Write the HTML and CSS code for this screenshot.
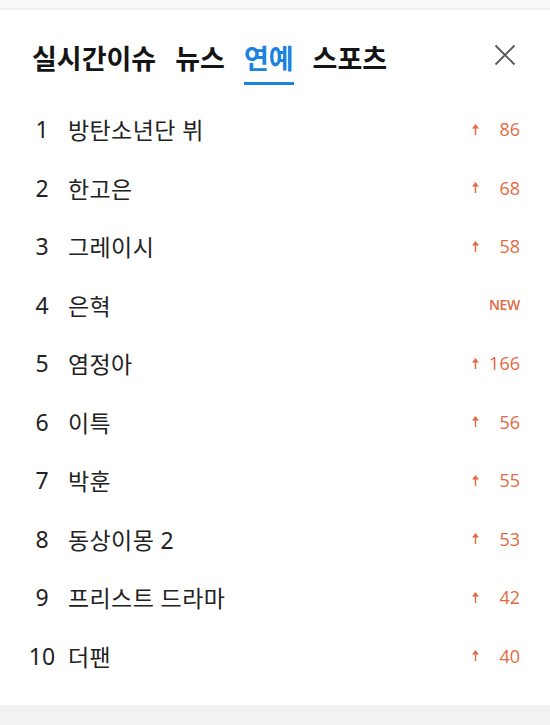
FILE: index.html
```html
<!DOCTYPE html>
<html lang="ko">
<head>
<meta charset="utf-8">
<link rel="stylesheet" href="styles.css">
</head>
<body>
<div class="page">
  <div class="topbar"></div>
  <div class="header">
    <div class="tabs">
      <span class="tab">실시간이슈</span>
      <span class="tab">뉴스</span>
      <span class="tab active">연예</span>
      <span class="tab">스포츠</span>
    </div>
    <svg class="close" width="22" height="22" viewBox="0 0 22 22"><path d="M1.5 1.5 L20.5 20.5 M20.5 1.5 L1.5 20.5" stroke="#555" stroke-width="1.8" fill="none"/></svg>
  </div>
  <ul class="list">
    <li class="row"><span class="rank">1</span><span class="name">방탄소년단 뷔</span><span class="delta"><svg class="arrow" width="7" height="11" viewBox="0 0 7 11"><path d="M3.5 0 L7 4.5 L0 4.5 Z" fill="#e4693f"/><rect x="2.8" y="3.5" width="1.4" height="7.5" fill="#e4693f"/></svg><span class="num">86</span></span></li>
    <li class="row"><span class="rank">2</span><span class="name">한고은</span><span class="delta"><svg class="arrow" width="7" height="11" viewBox="0 0 7 11"><path d="M3.5 0 L7 4.5 L0 4.5 Z" fill="#e4693f"/><rect x="2.8" y="3.5" width="1.4" height="7.5" fill="#e4693f"/></svg><span class="num">68</span></span></li>
    <li class="row"><span class="rank">3</span><span class="name">그레이시</span><span class="delta"><svg class="arrow" width="7" height="11" viewBox="0 0 7 11"><path d="M3.5 0 L7 4.5 L0 4.5 Z" fill="#e4693f"/><rect x="2.8" y="3.5" width="1.4" height="7.5" fill="#e4693f"/></svg><span class="num">58</span></span></li>
    <li class="row"><span class="rank">4</span><span class="name">은혁</span><span class="delta new">NEW</span></li>
    <li class="row"><span class="rank">5</span><span class="name">염정아</span><span class="delta"><svg class="arrow" width="7" height="11" viewBox="0 0 7 11"><path d="M3.5 0 L7 4.5 L0 4.5 Z" fill="#e4693f"/><rect x="2.8" y="3.5" width="1.4" height="7.5" fill="#e4693f"/></svg><span class="num">166</span></span></li>
    <li class="row"><span class="rank">6</span><span class="name">이특</span><span class="delta"><svg class="arrow" width="7" height="11" viewBox="0 0 7 11"><path d="M3.5 0 L7 4.5 L0 4.5 Z" fill="#e4693f"/><rect x="2.8" y="3.5" width="1.4" height="7.5" fill="#e4693f"/></svg><span class="num">56</span></span></li>
    <li class="row"><span class="rank">7</span><span class="name">박훈</span><span class="delta"><svg class="arrow" width="7" height="11" viewBox="0 0 7 11"><path d="M3.5 0 L7 4.5 L0 4.5 Z" fill="#e4693f"/><rect x="2.8" y="3.5" width="1.4" height="7.5" fill="#e4693f"/></svg><span class="num">55</span></span></li>
    <li class="row"><span class="rank">8</span><span class="name">동상이몽 2</span><span class="delta"><svg class="arrow" width="7" height="11" viewBox="0 0 7 11"><path d="M3.5 0 L7 4.5 L0 4.5 Z" fill="#e4693f"/><rect x="2.8" y="3.5" width="1.4" height="7.5" fill="#e4693f"/></svg><span class="num">53</span></span></li>
    <li class="row"><span class="rank">9</span><span class="name">프리스트 드라마</span><span class="delta"><svg class="arrow" width="7" height="11" viewBox="0 0 7 11"><path d="M3.5 0 L7 4.5 L0 4.5 Z" fill="#e4693f"/><rect x="2.8" y="3.5" width="1.4" height="7.5" fill="#e4693f"/></svg><span class="num">42</span></span></li>
    <li class="row"><span class="rank">10</span><span class="name">더팬</span><span class="delta"><svg class="arrow" width="7" height="11" viewBox="0 0 7 11"><path d="M3.5 0 L7 4.5 L0 4.5 Z" fill="#e4693f"/><rect x="2.8" y="3.5" width="1.4" height="7.5" fill="#e4693f"/></svg><span class="num">40</span></span></li>
  </ul>
  <div class="footer"></div>
</div>
</body>
</html>
```

FILE: styles.css
```css
html, body {
  margin: 0;
  padding: 0;
  background: #ffffff;
}
body {
  font-family: "Noto Sans", "Noto Sans CJK KR", sans-serif;
  color: #222222;
}
.page {
  width: 550px;
  height: 725px;
  display: flex;
  flex-direction: column;
}
.topbar {
  height: 8px;
  background: #fafafa;
  border-bottom: 2px solid #f0f0f0;
}
.header {
  display: flex;
  justify-content: space-between;
  align-items: flex-start;
  padding: 34px 34px 15px 32px;
}
.tabs {
  display: flex;
  gap: 19px;
}
.tab {
  font-family: "Noto Sans CJK KR", sans-serif;
  font-size: 27px;
  font-weight: 700;
  line-height: 27px;
  color: #141414;
  padding-bottom: 11px;
  border-bottom: 3px solid transparent;
}
.tab.active {
  color: #1b82df;
  border-bottom-color: #1b82df;
}
.close {
  display: block;
}
.list {
  list-style: none;
  margin: 0;
  padding: 0 30px 0 28px;
}
.row {
  height: 58.5px;
  display: flex;
  align-items: center;
}
.rank {
  width: 28px;
  text-align: center;
  font-size: 23px;
  color: #222;
}
.name {
  flex: 1;
  margin-left: 12px;
  font-size: 23px;
  letter-spacing: 0.4px;
  color: #222;
  font-family: "Noto Sans", "Noto Sans CJK KR", sans-serif;
}
.delta {
  width: 48px;
  display: flex;
  align-items: center;
  justify-content: space-between;
  color: #e4693f;
  font-family: "Open Sans", sans-serif;
  font-size: 18px;
}
.delta.new {
  justify-content: flex-end;
  font-size: 14px;
  font-weight: 600;
  letter-spacing: -0.3px;
}
.arrow {
  display: block;
}
.footer {
  margin-top: auto;
  height: 20px;
  background: #f2f2f2;
}
```
